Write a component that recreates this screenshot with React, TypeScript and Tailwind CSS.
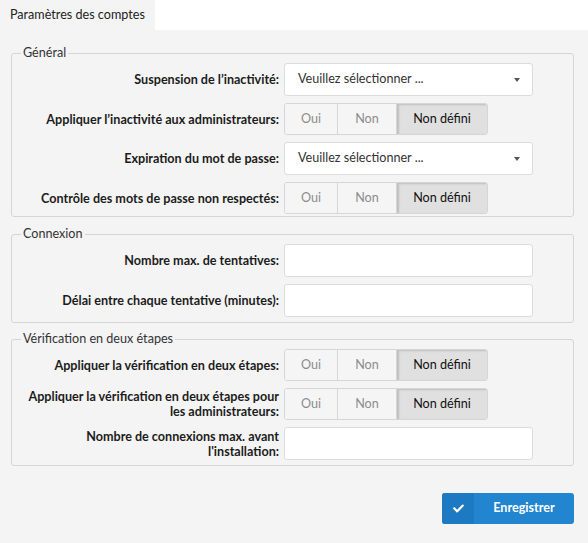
import type { ReactNode } from 'react'

type Choice = 'oui' | 'non' | 'undef'

function Label({ children }: { children: ReactNode }) {
  return (
    <div className="w-[256px] shrink-0 text-right text-[12.6px] font-bold leading-[15px] text-[#1c1c1c]">
      {children}
    </div>
  )
}

function Row({ label, children }: { label: ReactNode; children: ReactNode }) {
  return (
    <div className="flex items-center gap-[5px]">
      <Label>{label}</Label>
      {children}
    </div>
  )
}

function SelectBox() {
  return (
    <div className="flex h-[33px] w-[249px] items-center justify-between rounded-[3px] border border-[#dcdcdc] bg-white pl-[13px] pr-[12px] text-[12.6px] text-[#333]">
      <span>Veuillez sélectionner ...</span>
      <span className="h-0 w-0 border-x-[3.5px] border-t-[4px] border-x-transparent border-t-[#555]" />
    </div>
  )
}

function TextBox() {
  return <div className="h-[33px] w-[249px] rounded-[3px] border border-[#dcdcdc] bg-white" />
}

function Toggle({ value = 'undef' }: { value?: Choice }) {
  const items: { key: Choice; label: string; w: string }[] = [
    { key: 'oui', label: 'Oui', w: 'w-[53px]' },
    { key: 'non', label: 'Non', w: 'w-[59px]' },
    { key: 'undef', label: 'Non défini', w: 'w-[90px]' },
  ]
  return (
    <div className="flex h-[32px] overflow-hidden rounded-[3px] border border-[#d6d6d6]">
      {items.map((item, i) => (
        <div
          key={item.key}
          className={[
            'flex items-center justify-center text-[12.6px]',
            item.w,
            i < items.length - 1 ? 'border-r border-[#d6d6d6]' : '',
            value === item.key
              ? 'bg-[#e0e0e0] text-[#111] shadow-[inset_2px_1px_2px_rgba(0,0,0,0.15)]'
              : 'bg-[#f5f5f5] text-[#8c8c8c]',
          ].join(' ')}
        >
          {item.label}
        </div>
      ))}
    </div>
  )
}

function Section({
  title,
  className,
  children,
}: {
  title: string
  className?: string
  children: ReactNode
}) {
  return (
    <fieldset
      className={`rounded-[3px] border border-[#d5d5d5] pl-[11px] ${className ?? ''}`}
    >
      <legend className="ml-[-2px] px-[2px] text-[12.6px] leading-[16px] text-[#333]">
        {title}
      </legend>
      <div className="mt-[2px] flex flex-col gap-[7px]">{children}</div>
    </fieldset>
  )
}

export default function App() {
  return (
    <div className="min-h-[543px] w-full bg-[#f4f4f4] font-['Lato',sans-serif]">
      <div className="flex h-[30px] bg-white">
        <div className="flex items-center whitespace-nowrap bg-[#f4f4f4] px-[10px] text-[12.6px] text-[#222]">
          Paramètres des comptes
        </div>
      </div>

      <div className="pl-[11px] pr-[14px] pt-[15px]">
        <Section title="Général" className="pb-[2px]">
          <Row label="Suspension de l’inactivité:">
            <SelectBox />
          </Row>
          <Row label="Appliquer l’inactivité aux administrateurs:">
            <Toggle />
          </Row>
          <Row label="Expiration du mot de passe:">
            <SelectBox />
          </Row>
          <Row label="Contrôle des mots de passe non respectés:">
            <Toggle />
          </Row>
        </Section>

        <Section title="Connexion" className="mt-[9px] pb-[5px]">
          <Row label="Nombre max. de tentatives:">
            <TextBox />
          </Row>
          <Row label="Délai entre chaque tentative (minutes):">
            <TextBox />
          </Row>
        </Section>

        <Section title="Vérification en deux étapes" className="mt-[8px] pb-[5px]">
          <Row label="Appliquer la vérification en deux étapes:">
            <Toggle />
          </Row>
          <Row label="Appliquer la vérification en deux étapes pour les administrateurs:">
            <Toggle />
          </Row>
          <Row label="Nombre de connexions max. avant l'installation:">
            <TextBox />
          </Row>
        </Section>

        <div className="mt-[27px] flex justify-end">
          <button
            type="button"
            className="flex h-[31px] w-[132px] overflow-hidden rounded-[3px] bg-[#2185d0] text-[12.6px] font-bold text-white"
          >
            <span className="flex h-full w-[32px] items-center justify-center bg-[#1e79c3]">
              <svg viewBox="0 0 512 512" className="h-[11px] w-[11px]" fill="currentColor">
                <path d="M173.9 439.4l-166.4-166.4c-10-10-10-26.2 0-36.2l36.2-36.2c10-10 26.2-10 36.2 0L192 312.7 432.1 72.6c10-10 26.2-10 36.2 0l36.2 36.2c10 10 10 26.2 0 36.2L210.1 439.4c-10 10-26.2 10-36.2 0z" />
              </svg>
            </span>
            <span className="flex flex-1 items-center justify-center">Enregistrer</span>
          </button>
        </div>
      </div>
    </div>
  )
}
